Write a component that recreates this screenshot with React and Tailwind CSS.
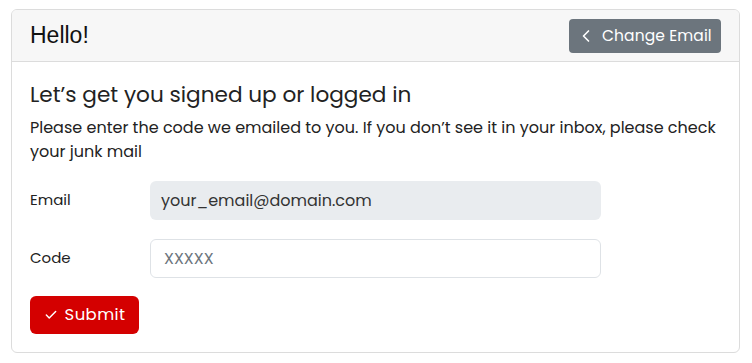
import React from 'react';
import { ChevronLeft, Check } from 'lucide-react';

const bodyFont = { fontFamily: "Poppins, 'Noto Sans', sans-serif" };

export default function App() {
  return (
    <div className="w-[752px] h-[363px] bg-white pt-[9px] pl-[11px]" style={bodyFont}>
      <div className="w-[729px] h-[344px] border border-[#dcdcdc] rounded-md overflow-hidden flex flex-col">
        {/* header */}
        <div className="h-[52px] bg-[#f7f7f7] border-b border-[#dcdcdc] flex items-center justify-between pl-[18px] pr-[18px]">
          <h1 className="text-[23px] text-[#111] font-['Liberation_Sans',Arial,sans-serif]">Hello!</h1>
          <button className="h-[34px] w-[152px] pl-[7px] bg-[#6c757d] rounded text-white text-[15.5px] tracking-[0.1px] flex items-center gap-[6px]">
            <ChevronLeft size={20} strokeWidth={2} />
            Change Email
          </button>
        </div>

        {/* body */}
        <div className="flex-1 px-[18px] pt-[18px]">
          <h2 className="text-[21.6px] leading-[30px] text-[#222]">Let’s get you signed up or logged in</h2>
          <p className="text-[16px] leading-[24px] text-[#222] mt-[6px]">
            Please enter the code we emailed to you. If you don’t see it in your inbox, please check your junk mail
          </p>

          <div className="mt-[17px] flex flex-col gap-[19px]">
            <div className="flex items-center">
              <label className="w-[120px] text-[15px] text-[#222]">Email</label>
              <div className="w-[451px] h-[39px] bg-[#e9ecef] rounded-md flex items-center px-[11px] text-[16px] text-[#333]">
                your_email@domain.com
              </div>
            </div>
            <div className="flex items-center">
              <label className="w-[120px] text-[15px] text-[#222]">Code</label>
              <input
                placeholder="XXXXX"
                className="w-[451px] h-[39px] bg-white border border-[#dee2e6] rounded-md px-[13px] text-[16px] placeholder:text-[#6c757d] outline-none"
              />
            </div>
          </div>

          <button className="mt-[18px] h-[38px] w-[109px] bg-[#d40000] rounded-md text-white text-[16.5px] tracking-[0.4px] flex items-center justify-center gap-[7px]">
            <Check size={14} strokeWidth={2.5} />
            Submit
          </button>
        </div>
      </div>
    </div>
  );
}
